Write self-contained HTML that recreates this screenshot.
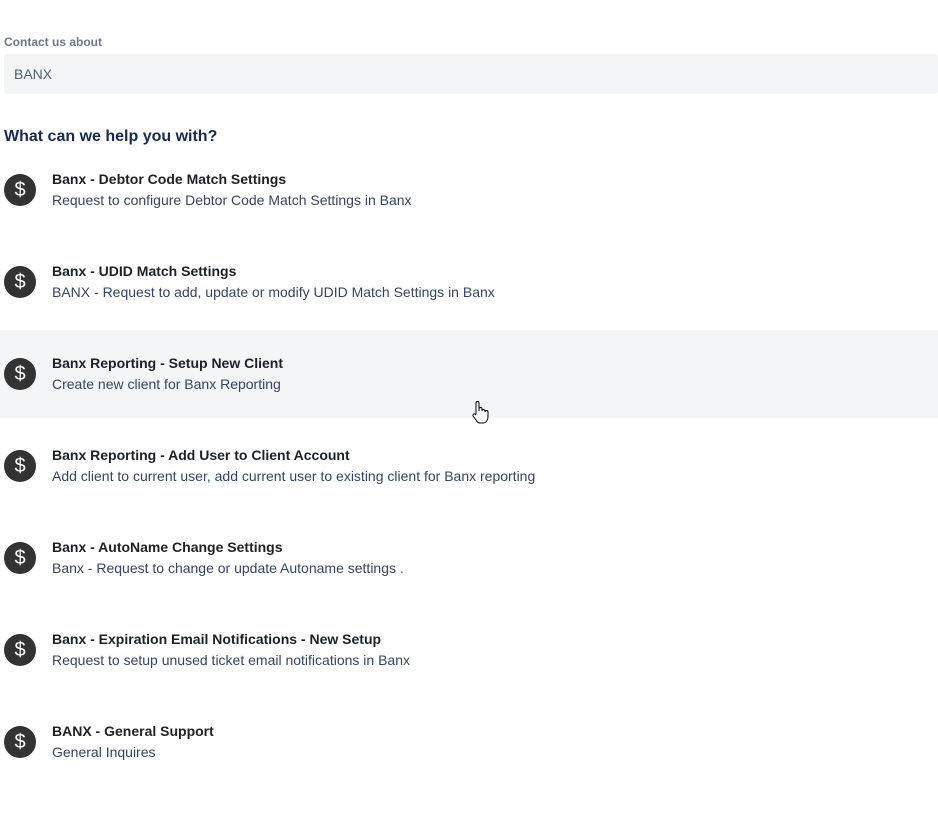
<!DOCTYPE html>
<html><head><style>
body{margin:0;width:938px;height:834px;background:#fff;font-family:"Liberation Sans",sans-serif;position:relative;overflow:hidden}
.lab{position:absolute;left:4px;top:35px;font-size:12px;font-weight:bold;color:#6b778c}
.inp{position:absolute;left:4px;top:54px;width:934px;height:40px;background:#f4f5f7;border-radius:3px;font-size:14px;color:#505f79;line-height:40px;box-sizing:border-box;padding-left:10px}
.h{position:absolute;left:4px;top:128px;font-size:16px;font-weight:bold;color:#172b4d}
.row{position:absolute;left:0;width:938px;height:88px}
.row.hl{background:#f4f5f7}
.ic{position:absolute;left:4px;top:28px;width:32px;height:32px;border-radius:50%;background:#333;color:#fff;font-size:20px;text-align:center;line-height:32px}
.t{position:absolute;left:52px;top:25px;font-size:14px;font-weight:bold;color:#1d2125;white-space:nowrap}
.d{position:absolute;left:52px;top:46px;font-size:14px;color:#344563;white-space:nowrap}
</style></head><body>
<div class="lab">Contact us about</div>
<div class="inp">BANX</div>
<div class="h">What can we help you with?</div>
<div class="row" style="top:146px"><div class="ic">$</div><div class="t">Banx - Debtor Code Match Settings</div><div class="d">Request to configure Debtor Code Match Settings in Banx</div></div>
<div class="row" style="top:238px"><div class="ic">$</div><div class="t">Banx - UDID Match Settings</div><div class="d">BANX - Request to add, update or modify UDID Match Settings in Banx</div></div>
<div class="row hl" style="top:330px"><div class="ic">$</div><div class="t">Banx Reporting - Setup New Client</div><div class="d">Create new client for Banx Reporting</div></div>
<div class="row" style="top:422px"><div class="ic">$</div><div class="t">Banx Reporting - Add User to Client Account</div><div class="d">Add client to current user, add current user to existing client for Banx reporting</div></div>
<div class="row" style="top:514px"><div class="ic">$</div><div class="t">Banx - AutoName Change Settings</div><div class="d">Banx - Request to change or update Autoname settings .</div></div>
<div class="row" style="top:606px"><div class="ic">$</div><div class="t">Banx - Expiration Email Notifications - New Setup</div><div class="d">Request to setup unused ticket email notifications in Banx</div></div>
<div class="row" style="top:698px"><div class="ic">$</div><div class="t">BANX - General Support</div><div class="d">General Inquires</div></div>
<svg style="position:absolute;left:471px;top:400px" width="18" height="26" viewBox="0 0 18 26"><path d="M5 14V3a1.5 1.5 0 0 1 3 0v8V9a1.5 1.5 0 0 1 3 0v2a1.5 1.5 0 0 1 3 0v1a1.5 1.5 0 0 1 3 0v5c0 3-2 6-5 6H9c-2 0-3-1-4-3l-3-4a1.5 1.5 0 0 1 2-2l1 1" fill="#fff" stroke="#000" stroke-width="1"/></svg>
</body></html>
